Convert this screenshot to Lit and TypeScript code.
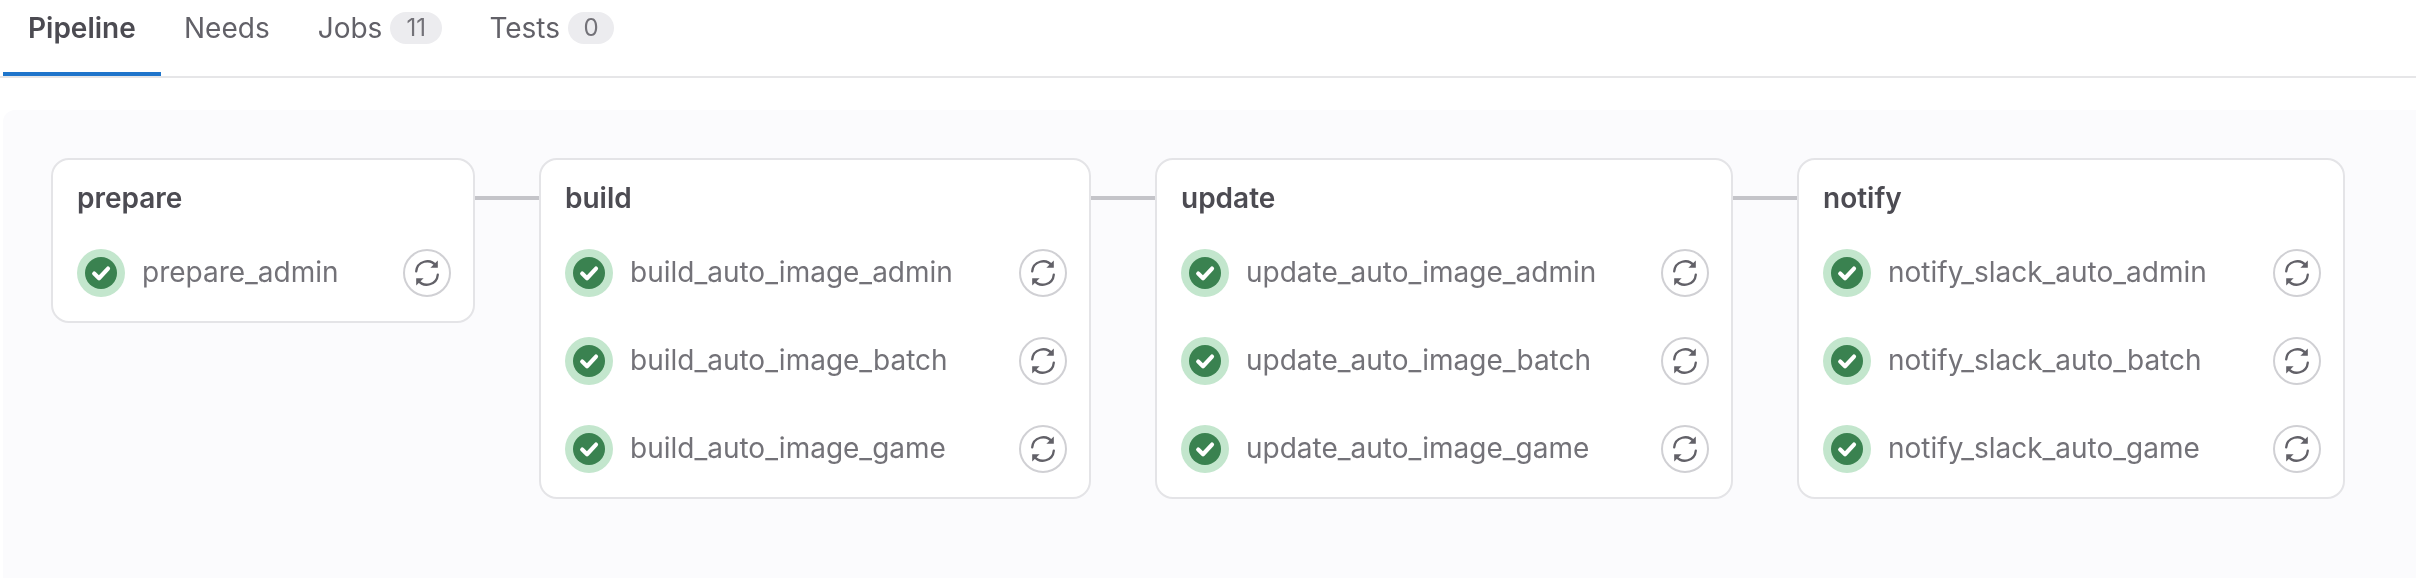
import { LitElement, html, css, svg } from "lit";
import { customElement } from "lit/decorators.js";

const STAGES = [
  { name: "prepare", width: 424, jobs: ["prepare_admin"] },
  { name: "build", width: 552, jobs: ["build_auto_image_admin", "build_auto_image_batch", "build_auto_image_game"] },
  { name: "update", width: 578, jobs: ["update_auto_image_admin", "update_auto_image_batch", "update_auto_image_game"] },
  { name: "notify", width: 548, jobs: ["notify_slack_auto_admin", "notify_slack_auto_batch", "notify_slack_auto_game"] },
];

const check = svg`<path d="M4.6 8.3 7 10.6 11.5 5.8" fill="none" stroke="#fff" stroke-width="2.1" stroke-linecap="round" stroke-linejoin="round"/>`;
const retry = svg`
  <path d="M2.6 7.2A5.5 5.5 0 0 1 12.5 4.4" fill="none" stroke="currentColor" stroke-width="1.15" stroke-linecap="round"/>
  <path d="M13.4 1.7V5.4H9.7Z" fill="currentColor"/>
  <path d="M13.4 8.8A5.5 5.5 0 0 1 3.5 11.6" fill="none" stroke="currentColor" stroke-width="1.15" stroke-linecap="round"/>
  <path d="M2.6 14.3V10.6H6.3Z" fill="currentColor"/>`;

@customElement("app-root")
export class AppRoot extends LitElement {
  static styles = css`
    :host {
      display: block;
      width: 2416px;
      height: 578px;
      overflow: hidden;
      background: #fff;
      font-family: Inter, "Noto Sans", sans-serif;
      color: #4c4b52;
      filter: blur(0.6px);
    }
    .tabs {
      display: flex;
      height: 78px;
      box-sizing: border-box;
      border-bottom: 2px solid #e6e6e8;
      padding-left: 3px;
    }
    .tab {
      display: flex;
      align-items: flex-start;
      height: 76px;
      padding: 0 24px;
      font-size: 28px;
      line-height: 56px;
      color: #626168;
      gap: 8px;
      white-space: nowrap;
    }
    .tab.needs { padding-left: 23px; }
    .tab.jobs-tab { padding-right: 23px; }
    .tab.active {
      box-sizing: border-box;
      width: 158px;
      padding: 0 0 0 25px;
      color: #4c4b52;
      font-weight: 600;
      box-shadow: inset 0 -4px 0 #1f75cb;
    }
    .badge {
      margin-top: 12px;
      height: 32px;
      line-height: 32px;
      border-radius: 16px;
      background: #ececef;
      font-size: 24px;
      text-align: center;
      color: #737278;
    }
    .b11 { width: 52px; }
    .b0 { width: 46px; }
    .panel {
      margin: 32px 0 0 3px;
      height: 468px;
      box-sizing: border-box;
      background: #fbfbfd;
      border-radius: 12px 0 0 0;
      padding: 48px 0 0 48px;
      display: flex;
      align-items: flex-start;
    }
    .stage {
      flex: none;
      box-sizing: border-box;
      background: #fff;
      border: 2px solid #e4e4e7;
      border-radius: 18px;
      padding: 18px 22px 24px 24px;
    }
    .title {
      font-size: 28px;
      font-weight: 600;
      line-height: 40px;
      padding-bottom: 31px;
      color: #4c4b52;
    }
    .jobs {
      display: flex;
      flex-direction: column;
      gap: 40px;
    }
    .job {
      display: flex;
      align-items: center;
      height: 48px;
    }
    .status {
      flex: none;
      width: 48px;
      height: 48px;
      margin-right: 17px;
    }
    .name {
      flex: 1;
      font-size: 28px;
      line-height: 34px;
      padding-bottom: 2px;
      color: #737278;
      white-space: nowrap;
    }
    .retry {
      flex: none;
      box-sizing: border-box;
      width: 48px;
      height: 48px;
      border: 2px solid #d0d0d4;
      border-radius: 50%;
      display: flex;
      align-items: center;
      justify-content: center;
      color: #626168;
    }
    .retry svg { width: 32px; height: 32px; }
    .link {
      flex: none;
      width: 64px;
      height: 4px;
      margin-top: 38px;
      background: #c4c4c9;
    }
  `;

  render() {
    return html`
      <div class="tabs">
        <div class="tab active">Pipeline</div>
        <div class="tab needs">Needs</div>
        <div class="tab jobs-tab">Jobs <span class="badge b11">11</span></div>
        <div class="tab">Tests <span class="badge b0">0</span></div>
      </div>
      <div class="panel">
        ${STAGES.map(
          (s, i) => html`
            ${i > 0 ? html`<div class="link"></div>` : ""}
            <div class="stage" style="width:${s.width}px">
              <div class="title">${s.name}</div>
              <div class="jobs">
                ${s.jobs.map(
                  (j) => html`
                    <div class="job">
                      <svg class="status" viewBox="0 0 48 48">
                        <circle cx="24" cy="24" r="24" fill="#c3e6cd"></circle>
                        <circle cx="24" cy="24" r="16" fill="#3a8250"></circle>
                        <svg x="8" y="8" width="32" height="32" viewBox="0 0 16 16">${check}</svg>
                      </svg>
                      <span class="name">${j}</span>
                      <span class="retry"><svg viewBox="0 0 16 16">${retry}</svg></span>
                    </div>
                  `
                )}
              </div>
            </div>
          `
        )}
      </div>
    `;
  }
}
